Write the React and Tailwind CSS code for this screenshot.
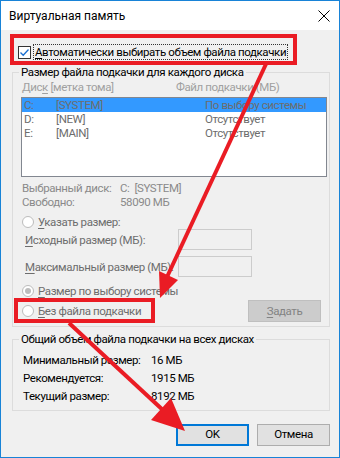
import React from 'react';

const FONT = { fontFamily: 'Roboto, "Liberation Sans", sans-serif' };

const U = ({ children }) => <span className="underline underline-offset-2">{children}</span>;

const Radio = ({ checked }) => (
  <span className="w-[12px] h-[12px] rounded-full border border-[#bcbcbc] bg-white flex items-center justify-center shrink-0">
    {checked && <span className="w-[6px] h-[6px] rounded-full bg-[#bcbcbc]" />}
  </span>
);

const DISKS = [
  { d: 'C:', label: '[SYSTEM]', size: 'По выбору системы', selected: true },
  { d: 'D:', label: '[NEW]', size: 'Отсутствует' },
  { d: 'E:', label: '[MAIN]', size: 'Отсутствует' },
];

const TOTALS = [
  ['Минимальный размер:', '16 МБ'],
  ['Рекомендуется:', '1915 МБ'],
  ['Текущий размер:', '8192 МБ'],
];

function Annotations() {
  return (
    <svg className="absolute inset-0 pointer-events-none" width="340" height="458">
      <g stroke="#ea1c24" fill="none" strokeWidth="4">
        <rect x="11" y="35" width="283" height="27" />
        <rect x="15" y="299" width="137" height="21" />
        <line x1="265" y1="63" x2="166" y2="276" />
        <line x1="68" y1="322" x2="164" y2="411" />
      </g>
      <g fill="#ea1c24">
        <polygon points="159,297 177,279 158,270" />
        <polygon points="184,430 170,397 150,419" />
      </g>
    </svg>
  );
}

export default function App() {
  return (
    <div className="relative w-[340px] h-[458px] border border-[#1883d7] flex flex-col text-[11.5px] tracking-[-0.4px] leading-[16px] text-black bg-[#f0f0f0] whitespace-nowrap" style={FONT}>
      {/* Title bar */}
      <div className="h-[29px] bg-white flex items-center justify-between pl-[8px] pr-[9px] shrink-0">
        <span className="text-[12px] tracking-normal">Виртуальная память</span>
        <svg width="12" height="12" viewBox="0 0 12 12">
          <path d="M0.5 0.5 L11.5 11.5 M11.5 0.5 L0.5 11.5" stroke="#000" strokeWidth="1" />
        </svg>
      </div>

      <div className="flex-1 flex flex-col pl-[11px]">
        {/* Auto checkbox */}
        <div className="mt-[14px] ml-[6px] flex items-center h-[16px]">
          <span className="w-[13px] h-[13px] border border-[#333] bg-white flex items-center justify-center">
            <svg width="11" height="11" viewBox="0 0 11 11">
              <path d="M1.5 5.5 L4.2 8.3 L9.5 2.5" stroke="#1a6fd1" strokeWidth="1.3" fill="none" />
            </svg>
          </span>
          <span className="ml-[2px] px-[1px] border border-dotted border-[#333] leading-[14px]">
            <U>А</U>втоматически выбирать объем файла подкачки
          </span>
        </div>

        {/* Per-disk group */}
        <fieldset className="mt-[4px] w-[318px] border border-[#dcdcdc] pb-[4px]">
          <legend className="ml-[6px] px-[2px]">Размер файла подкачки для каждого диска</legend>

          <div className="flex h-[14px] items-center text-[#a0a0a0] leading-[14px]">
            <span className="ml-[9px] w-[154px]">Дис<U>к</U> [метка тома]</span>
            <span>Файл подкачки (МБ)</span>
          </div>

          <div className="mt-[3px] ml-[8px] w-[306px] h-[80px] border border-[#828790] bg-white text-[#6d6d6d]">
            {DISKS.map((r) => (
              <div key={r.d} className={`flex items-center h-[14px] leading-[14px] ${r.selected ? 'bg-[#3399ff]' : ''}`}>
                <span className="ml-[2px] w-[32px]">{r.d}</span>
                <span className="w-[149px]">{r.label}</span>
                <span>{r.size}</span>
              </div>
            ))}
          </div>

          <div className="mt-[4px] ml-[9px] text-[#8a8a8a] leading-[14px]">
            <div className="flex h-[14px] items-center">
              <span className="w-[98px]">Выбранный диск:</span>
              <span>C:&nbsp;&nbsp;[SYSTEM]</span>
            </div>
            <div className="flex h-[14px] items-center">
              <span className="w-[98px]">Свободно:</span>
              <span>58090 МБ</span>
            </div>
          </div>

          <div className="mt-[6px] ml-[9px] flex items-center h-[14px] text-[#6d6d6d]">
            <Radio />
            <span className="ml-[4px]"><U>У</U>казать размер:</span>
          </div>

          <div className="ml-[12px] flex items-center h-[21px] text-[#6d6d6d]">
            <span className="w-[153px]"><U>И</U>сходный размер (МБ):</span>
            <span className="w-[74px] h-[21px] border border-[#cccccc]" />
          </div>
          <div className="mt-[6px] ml-[12px] flex items-center h-[21px] text-[#6d6d6d]">
            <span className="w-[153px]"><U>М</U>аксимальный размер (МБ):</span>
            <span className="w-[74px] h-[21px] border border-[#cccccc]" />
          </div>

          <div className="mt-[7px] ml-[9px] flex items-center h-[14px] text-[#6d6d6d]">
            <Radio checked />
            <span className="ml-[4px]"><U>Р</U>азмер по выбору системы</span>
          </div>

          <div className="mt-[2px] ml-[9px] flex items-center h-[22px] text-[#6d6d6d]">
            <Radio />
            <span className="ml-[4px]"><U>Б</U>ез файла подкачки</span>
            <span className="ml-auto mr-[8px] w-[73px] h-[22px] border border-[#bfbfbf] bg-[#cccccc] text-[#838383] flex items-center justify-center">
              <span><U>З</U>адать</span>
            </span>
          </div>
        </fieldset>

        {/* Totals group */}
        <fieldset className="mt-[4px] w-[318px] border border-[#dcdcdc] pb-[5px]">
          <legend className="ml-[6px] px-[2px]">Общий объем файла подкачки на всех дисках</legend>
          <div className="mt-[4px]">
            {TOTALS.map(([k, v]) => (
              <div key={k} className="flex items-center h-[18px] ml-[10px]">
                <span className="w-[128px]">{k}</span>
                <span>{v}</span>
              </div>
            ))}
          </div>
        </fieldset>

        {/* Buttons */}
        <div className="mt-[13px] flex justify-end gap-[8px] mr-[9px]">
          <button className="w-[73px] h-[22px] border-2 border-[#0078d7] bg-[#e1e1e1] leading-none">OK</button>
          <button className="w-[73px] h-[22px] border border-[#adadad] bg-[#e1e1e1] leading-none">Отмена</button>
        </div>
      </div>

      <Annotations />
    </div>
  );
}
